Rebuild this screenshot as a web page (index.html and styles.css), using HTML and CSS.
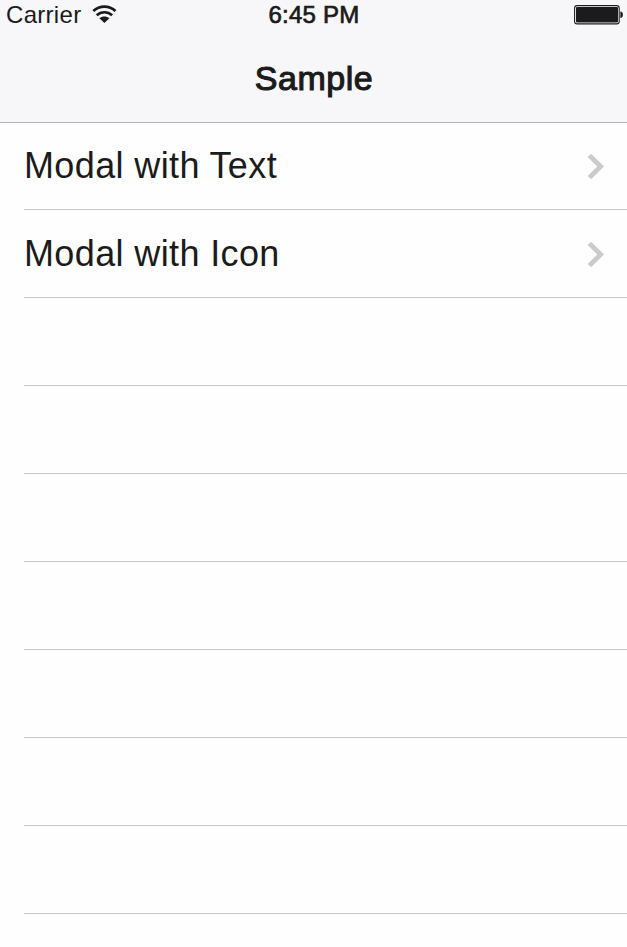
FILE: index.html
```html
<!DOCTYPE html>
<html lang="en">
<head>
<meta charset="utf-8">
<title>Sample</title>
<link rel="stylesheet" href="styles.css">
</head>
<body>
<header class="header">
  <div class="status">
    <div class="status-left">
      <span class="carrier">Carrier</span>
      <svg class="wifi" width="26" height="19" viewBox="0 0 26 19" fill="none" stroke="#1b1b1c">
        <path d="M1.3 6C7.6.1 17.2.1 23.5 6" stroke-width="2.7"/>
        <path d="M4.7 10.3c4.4-4.1 11-4.1 15.4 0" stroke-width="2.7"/>
        <path d="M7.4 13.3c2.8-2.5 7.2-2.5 10 0l-5 4.8z" fill="#1b1b1c" stroke="none"/>
      </svg>
    </div>
    <span class="time">6:45 PM</span>
    <svg class="battery" width="49" height="20" viewBox="0 0 49 20">
      <rect x=".6" y=".6" width="44.6" height="18.3" rx="2.5" fill="#fff" stroke="#1b1b1c" stroke-width="1.1"/>
      <rect x="2" y="2" width="42" height="15.5" rx="1" fill="#1b1b1c"/>
      <path d="M46.4 6.5h.8q1.8 1 1.8 3.3t-1.8 3.3h-.8z" fill="#1b1b1c"/>
    </svg>
  </div>
  <h1 class="title">Sample</h1>
</header>
<main class="list">
  <div class="row"><span class="label">Modal with Text</span><svg class="chevron" width="18" height="28" viewBox="0 0 18 28"><path d="M2.4 3.4 13.6 14.5 2.4 25.6" fill="none" stroke="#cbcbcd" stroke-width="4.8"/></svg></div>
  <div class="row"><span class="label">Modal with Icon</span><svg class="chevron" width="18" height="28" viewBox="0 0 18 28"><path d="M2.4 3.4 13.6 14.5 2.4 25.6" fill="none" stroke="#cbcbcd" stroke-width="4.8"/></svg></div>
  <div class="row"></div>
  <div class="row"></div>
  <div class="row"></div>
  <div class="row"></div>
  <div class="row"></div>
  <div class="row"></div>
  <div class="row"></div>
</main>
</body>
</html>
```
FILE: styles.css
```css
* { box-sizing: border-box; }
body {
  margin: 0;
  height: 947px;
  overflow: hidden;
  background: #fefefe;
  color: #1b1b1c;
  font-family: "Liberation Sans", Arial, sans-serif;
}
.header {
  height: 123px;
  background: #f7f7f9;
  border-bottom: 1px solid #b5b5b7;
}
.status {
  display: grid;
  grid-template-columns: 1fr auto 1fr;
  height: 34px;
  padding: 0 4px 0 6px;
  line-height: 30px;
}
.status-left { display: flex; gap: 11px; }
.carrier { width: 75px; font-size: 24px; letter-spacing: 0.3px; white-space: nowrap; }
.wifi { margin-top: 5px; }
.time {
  margin-left: -1px;
  font-size: 24px;
  letter-spacing: 0.25px;
  -webkit-text-stroke: 0.7px #1b1b1c;
}
.battery { justify-self: end; margin-top: 5px; }
.title {
  margin: 0;
  padding: 24px 0 0 1px;
  text-align: center;
  font-size: 34px;
  line-height: 40px;
  font-weight: 400;
  letter-spacing: 0.5px;
  -webkit-text-stroke: 1.1px #1b1b1c;
}
.list { padding-left: 24px; }
.row {
  display: flex;
  align-items: center;
  justify-content: space-between;
  height: 88px;
  padding-right: 22px;
  border-bottom: 1px solid #c8c8ca;
}
.row:first-child { height: 87px; }
.label { font-size: 36px; line-height: 42px; letter-spacing: 0.37px; white-space: nowrap; }
```
